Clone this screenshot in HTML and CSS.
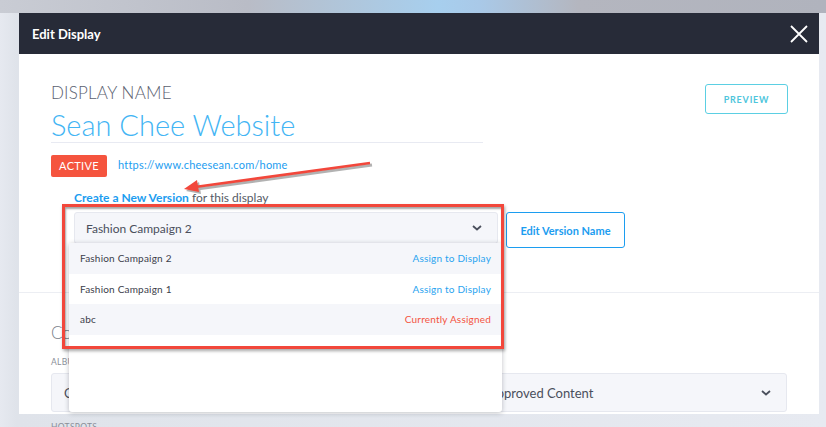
FILE: index.html
```html
<!DOCTYPE html>
<html lang="en">
<head>
    <meta charset="UTF-8">
    <meta name="viewport" content="width=device-width, initial-scale=1.0">
    <title>Edit Display</title>
    <link rel="stylesheet" href="styles.css">
</head>
<body>
    <div class="backdrop-glow"></div>
    <div class="modal">
        <div class="modal-header">
            <h2>Edit Display</h2>
            <svg class="close" width="18" height="18" viewBox="0 0 18 18">
                <path d="M1 1L17 17M17 1L1 17" stroke="#fff" stroke-width="1.8" fill="none"/>
            </svg>
        </div>
        <div class="modal-body">
            <div class="top">
                <div class="name-col">
                    <div class="label-lg">DISPLAY NAME</div>
                    <div class="display-title">Sean Chee Website</div>
                    <div class="status-row">
                        <span class="badge">ACTIVE</span>
                        <span class="url">https://www.cheesean.com/home</span>
                    </div>
                    <div class="create-line">
                        <span class="create-link">Create a New Version</span> for this display
                    </div>
                    <div class="version-row">
                        <div class="select-wrap">
                            <div class="select version-select">
                                <span>Fashion Campaign 2</span>
                                <svg width="10" height="6" viewBox="0 0 10 6"><path d="M1 1L5 4.5L9 1" stroke="#4a4f5c" stroke-width="1.8" fill="none"/></svg>
                            </div>
                            <div class="menu">
                                <div class="menu-item shaded"><span>Fashion Campaign 2</span><span class="assign">Assign to Display</span></div>
                                <div class="menu-item"><span>Fashion Campaign 1</span><span class="assign">Assign to Display</span></div>
                                <div class="menu-item shaded"><span>abc</span><span class="current">Currently Assigned</span></div>
                            </div>
                            <div class="highlight"></div>
                        </div>
                        <button class="btn-outline">Edit Version Name</button>
                    </div>
                </div>
                <button class="btn-preview">PREVIEW</button>
            </div>
            <div class="content">
                <div class="section-title">Content</div>
                <div class="label-sm">ALBUM</div>
                <div class="select album-select">
                    <span>Choose an album for this display</span>
                    <span>Approved Content</span>
                    <svg width="10" height="6" viewBox="0 0 10 6"><path d="M1 1L5 4.5L9 1" stroke="#4a4f5c" stroke-width="1.8" fill="none"/></svg>
                </div>
                <div class="label-sm">HOTSPOTS</div>
            </div>
            <svg class="arrow" width="240" height="60" viewBox="0 0 240 60">
                <g transform="translate(2,2)" opacity="0.45">
                    <path d="M200 3L25 27" stroke="#555" stroke-width="3" fill="none"/>
                    <path d="M14 29L27 20L29 32Z" fill="#555"/>
                </g>
                <path d="M200 3L25 27" stroke="#f2473b" stroke-width="2.6" fill="none"/>
                <path d="M14 29L27 20L29 32Z" fill="#f2473b"/>
            </svg>
        </div>
    </div>
</body>
</html>
```

FILE: styles.css
```css
body {
    margin: 0;
    font-family: Lato, "Noto Sans", sans-serif;
    background: linear-gradient(90deg, #e6e9f0 0%, #dfe3ea 2%, #e7eaf1 100%);
    height: 427px;
    overflow: hidden;
}
.backdrop-glow {
    position: absolute;
    top: 0;
    left: 0;
    width: 826px;
    height: 13px;
    background: linear-gradient(90deg, #c9ccd4 0%, #b9bcc6 30%, #a7cfee 53%, #a9c9e8 58%, #b4b6bf 70%, #b0b3bd 100%);
}
.modal {
    position: relative;
    margin: 13px 0 0 19px;
    width: 800px;
    background: #fff;
}
.modal-header {
    height: 41px;
    background: #272b38;
    display: flex;
    align-items: center;
    justify-content: space-between;
    padding: 0 11px 0 13px;
}
.modal-header h2 {
    margin: 0;
    color: #fff;
    font-size: 13px;
    font-weight: 700;
}
.modal-body {
    position: relative;
    height: 360px;
}
.top {
    display: flex;
    justify-content: space-between;
    align-items: flex-start;
    padding: 29px 31px 0 32px;
    height: 209px;
    border-bottom: 1px solid #eceef3;
}
.name-col {
    flex: 1;
}
.label-lg {
    font-size: 17px;
    line-height: 20px;
    color: #5b6170;
    font-weight: 300;
    letter-spacing: 0.2px;
}
.display-title {
    width: 432px;
    margin-top: 5px;
    font-size: 29px;
    line-height: 34px;
    font-weight: 300;
    color: #43b5f4;
    border-bottom: 1px solid #e8eaf2;
}
.status-row {
    display: flex;
    align-items: center;
    margin-top: 12px;
}
.badge {
    display: inline-block;
    background: #f5543e;
    color: #fff;
    font-size: 11px;
    line-height: 22px;
    height: 22px;
    width: 56px;
    text-align: center;
    border-radius: 2px;
    letter-spacing: 0.3px;
}
.url {
    margin-left: 11px;
    font-size: 11px;
    color: #1c9df0;
    letter-spacing: 0.2px;
    margin-top: -4px;
}
.create-line {
    margin: 13px 0 0 23px;
    font-size: 12px;
    line-height: 16px;
    color: #555a66;
}
.create-link {
    color: #1c9df0;
    font-weight: 700;
    border-bottom: 1px dashed #1c9df0;
}
.version-row {
    display: flex;
    align-items: flex-start;
    gap: 8px;
    margin: 6px 0 0 23px;
}
.select-wrap {
    position: relative;
    flex-shrink: 0;
}
.select {
    display: flex;
    align-items: center;
    justify-content: space-between;
    background: #f5f6fa;
    border: 1px solid #e6e8ef;
    border-radius: 3px;
    box-sizing: border-box;
    font-size: 12px;
    color: #4a4f5c;
}
.version-select {
    width: 424px;
    height: 32px;
    padding: 0 15px 0 11px;
}
.menu {
    position: absolute;
    left: -5px;
    top: 31px;
    width: 433px;
    height: 169px;
    background: #fff;
    border-radius: 3px;
    box-shadow: 0 1px 5px rgba(40, 45, 60, 0.3);
    z-index: 2;
}
.menu-item {
    display: flex;
    justify-content: space-between;
    align-items: center;
    height: 30.5px;
    padding: 0 11px 0 11px;
    font-size: 10px;
    color: #3c404b;
    letter-spacing: 0.2px;
}
.menu-item.shaded {
    background: #f5f6fa;
}
.assign {
    color: #2aa4f0;
}
.current {
    color: #f4543f;
}
.highlight {
    position: absolute;
    left: -12px;
    top: -8px;
    width: 442px;
    height: 145px;
    box-sizing: border-box;
    border: 3px solid #f2473b;
    box-shadow: 1px 2px 3px rgba(0, 0, 0, 0.35), inset 1px 2px 2px rgba(0, 0, 0, 0.35);
    z-index: 3;
}
.btn-outline {
    flex-shrink: 0;
    height: 36px;
    width: 119px;
    background: #fff;
    border: 1.5px solid #1c9df0;
    border-radius: 3px;
    color: #1c9df0;
    font-family: inherit;
    font-size: 11px;
    font-weight: 700;
    padding: 0;
}
.btn-preview {
    flex-shrink: 0;
    margin-top: 1px;
    width: 83px;
    height: 30px;
    background: #fff;
    border: 1.5px solid #5bcfe3;
    border-radius: 3px;
    color: #4ec5dc;
    font-family: inherit;
    font-size: 9px;
    font-weight: 700;
    letter-spacing: 0.8px;
    padding: 0;
}
.content {
    padding: 30px 32px 0 32px;
}
.section-title {
    font-size: 17px;
    line-height: 20px;
    color: #7a7f8a;
    font-weight: 300;
}
.label-sm {
    margin-top: 14px;
    font-size: 8.5px;
    color: #8a8f99;
    letter-spacing: 0.3px;
}
.album-select {
    display: grid;
    grid-template-columns: 424px 1fr auto;
    margin-top: 6px;
    width: 736px;
    height: 39px;
    padding: 0 15px 0 12px;
    font-size: 13px;
}
.album-select + .label-sm {
    margin-top: 10px;
}
.arrow {
    position: absolute;
    left: 151px;
    top: 106px;
}
```
